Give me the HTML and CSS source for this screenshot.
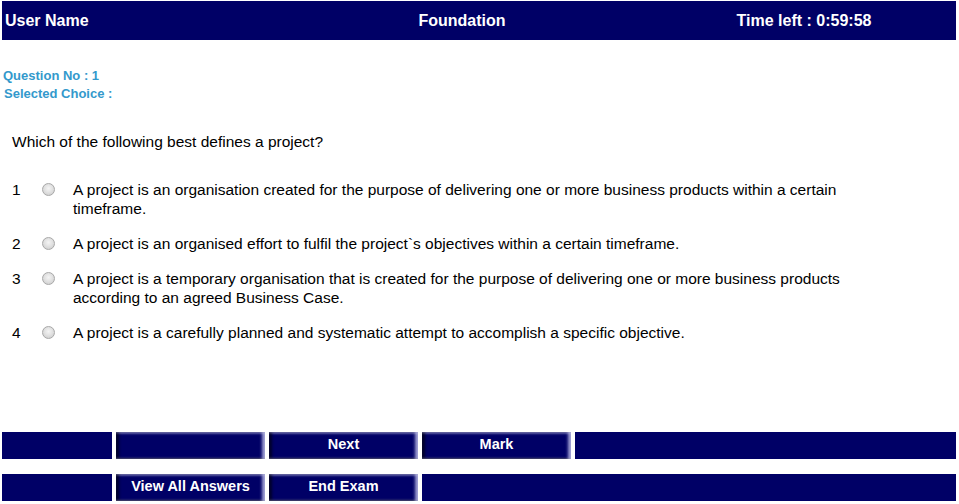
FILE: index.html
```html
<!DOCTYPE html>
<html>
<head>
<meta charset="utf-8">
<link rel="stylesheet" href="styles.css">
</head>
<body>
<div class="page">
  <div class="header">
    <div class="h-user">User Name</div>
    <div class="h-title">Foundation</div>
    <div class="h-time">Time left : 0:59:58</div>
  </div>

  <div class="info">
    <div class="info-line">Question No : 1</div>
    <div class="info-line">Selected Choice :</div>
  </div>

  <div class="question">Which of the following best defines a project?</div>

  <div class="options">
    <div class="opt">
      <div class="opt-num">1</div>
      <div class="opt-radio"><span class="radio"></span></div>
      <div class="opt-text">A project is an organisation created for the purpose of delivering one or more business products within a certain timeframe.</div>
    </div>
    <div class="opt">
      <div class="opt-num">2</div>
      <div class="opt-radio"><span class="radio"></span></div>
      <div class="opt-text">A project is an organised effort to fulfil the project`s objectives within a certain timeframe.</div>
    </div>
    <div class="opt">
      <div class="opt-num">3</div>
      <div class="opt-radio"><span class="radio"></span></div>
      <div class="opt-text">A project is a temporary organisation that is created for the purpose of delivering one or more business products according to an agreed Business Case.</div>
    </div>
    <div class="opt">
      <div class="opt-num">4</div>
      <div class="opt-radio"><span class="radio"></span></div>
      <div class="opt-text">A project is a carefully planned and systematic attempt to accomplish a specific objective.</div>
    </div>
  </div>

  <div class="bar bar-top">
    <div class="cell flat first"></div>
    <div class="cell btn"></div>
    <div class="cell btn">Next</div>
    <div class="cell btn">Mark</div>
    <div class="cell flat rest"></div>
  </div>
  <div class="bar bar-bottom">
    <div class="cell flat first"></div>
    <div class="cell btn">View All Answers</div>
    <div class="cell btn">End Exam</div>
    <div class="cell flat rest"></div>
  </div>
</div>
</body>
</html>
```

FILE: styles.css
```css
html, body {
  margin: 0;
  padding: 0;
  background: #ffffff;
}

body {
  font-family: "Liberation Sans", Arial, sans-serif;
  color: #000000;
}

.page {
  padding: 1px 3px 0 2px;
}

.header {
  display: grid;
  grid-template-columns: 270px 380px 1fr;
  height: 39px;
  background: #000066;
  color: #ffffff;
  font-weight: bold;
  font-size: 16px;
  align-items: center;
}

.h-user {
  padding-left: 3px;
}

.h-title {
  text-align: center;
}

.h-time {
  text-align: center;
}

.info {
  margin-top: 27px;
  color: #3399cc;
  font-weight: bold;
  font-size: 13px;
  line-height: 18px;
}

.info-line {
  padding-left: 1px;
}

.info-line + .info-line {
  padding-left: 2px;
}

.question {
  margin-top: 29px;
  padding-left: 10px;
  font-size: 15.5px;
  line-height: 19px;
}

.options {
  margin-top: 29px;
  display: flex;
  flex-direction: column;
  gap: 16px;
}

.opt {
  display: grid;
  grid-template-columns: 40px 31px 1fr;
  font-size: 15.5px;
  line-height: 19px;
}

.opt-num {
  padding-left: 10px;
}

.opt-radio {
  padding-top: 3px;
}

.radio {
  display: block;
  width: 11px;
  height: 11px;
  border-radius: 50%;
  border: 1px solid #a8a8a8;
  background: radial-gradient(circle at 50% 40%, #f4f4f4 0%, #e2e2e2 45%, #c8c8c8 100%);
}

.opt-text {
  padding-right: 80px;
}

.bar {
  display: flex;
  gap: 4px;
  height: 27px;
}

.bar-top {
  margin-top: 90px;
}

.bar-bottom {
  margin-top: 15px;
}

.cell {
  box-sizing: border-box;
  padding-bottom: 3px;
  background: #000066;
  color: #ffffff;
  font-weight: bold;
  font-size: 14.5px;
  display: flex;
  align-items: center;
  justify-content: center;
}

.first {
  width: 110px;
}

.rest {
  flex: 1;
}

.btn {
  width: 149px;
  box-shadow:
    inset -3px 0 3px rgba(210, 210, 245, 0.75),
    inset 3px 0 3px rgba(0, 0, 20, 0.75),
    inset 0 2px 2px rgba(110, 110, 190, 0.7),
    inset 0 -1px 1px rgba(0, 0, 30, 0.6);
}
```
